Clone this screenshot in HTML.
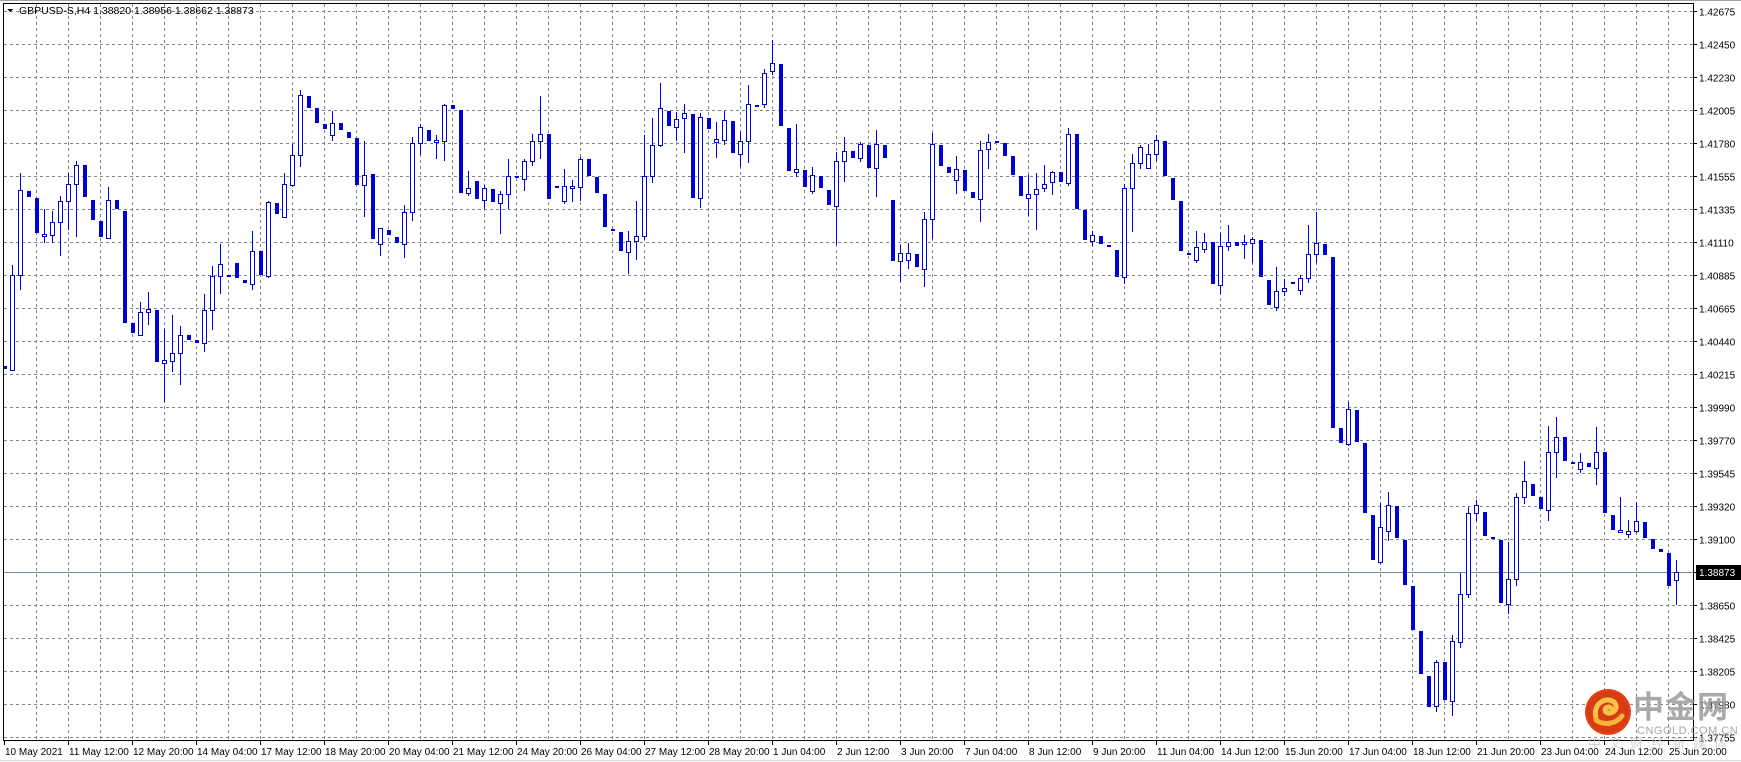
<!DOCTYPE html>
<html><head><meta charset="utf-8">
<style>
html,body{margin:0;padding:0;background:#fff;}
body{width:1741px;height:762px;overflow:hidden;position:relative;font-family:"Liberation Sans","DejaVu Sans",sans-serif;}
svg{position:absolute;left:0;top:0;}
</style></head>
<body>
<svg id="s" width="1741" height="762" xmlns="http://www.w3.org/2000/svg" shape-rendering="crispEdges">
<rect x="0" y="0" width="1741" height="762" fill="#fff"/>
<line x1="0" y1="0.5" x2="1741" y2="0.5" stroke="#a0a0a0"/>
<line x1="0" y1="760.5" x2="1741" y2="760.5" stroke="#d8d8d8"/>
<g id="grid"></g>
<g id="candles"></g>
<rect x="3.5" y="3.5" width="1690" height="737" fill="none" stroke="#000"/>
<g id="axis" font-family="Liberation Sans, DejaVu Sans, sans-serif" font-size="10" fill="#000"></g>
<polygon points="7,9 13,9 10,12" fill="#000"/>
<text x="19" y="14" font-size="10.5" fill="#000" font-family="Liberation Sans, sans-serif">GBPUSD-S,H4  1.38820 1.38956 1.38662 1.38873</text>
<g shape-rendering="geometricPrecision">
<circle cx="1608" cy="712" r="23" fill="#e04418"/>
<circle cx="1608" cy="712" r="21" fill="#d83c14"/>
<path d="M1596 718 C1592 704 1606 696 1614 702 C1620 708 1612 716 1606 712 C1603 709 1608 705 1611 708" fill="none" stroke="#f7c24a" stroke-width="5" stroke-linecap="round"/>
<path d="M1596 720 C1604 726 1616 724 1622 716" fill="none" stroke="#f7b23a" stroke-width="5" stroke-linecap="round"/>
<text x="1633" y="718" font-size="31" font-weight="bold" fill="#9a9a9a" fill-opacity="0.85" font-family="Noto Sans CJK SC, WenQuanYi Zen Hei, sans-serif" letter-spacing="1">中金网</text>
<text x="1637" y="734" font-size="11" fill="#a8a8a8" font-family="Liberation Sans, sans-serif" letter-spacing="0.5">CNGOLD.COM.CN</text>
<text x="1588" y="748" font-size="13" fill="#c8c8c8" fill-opacity="0.8" font-family="Noto Sans CJK SC, sans-serif" letter-spacing="8">中文财经新媒体</text>
</g>
</svg>
<script>
var NS="http://www.w3.org/2000/svg";
function el(p,t,a,txt){var e=document.createElementNS(NS,t);for(var k in a)e.setAttribute(k,a[k]);if(txt!==undefined)e.textContent=txt;p.appendChild(e);return e;}
var grid=document.getElementById('grid'),ax=document.getElementById('axis'),cg=document.getElementById('candles');
var gc="#778899";
var prices=["1.42675","1.42450","1.42230","1.42005","1.41780","1.41555","1.41335","1.41110","1.40885","1.40665","1.40440","1.40215","1.39990","1.39770","1.39545","1.39320","1.39100","","1.38650","1.38425","1.38205","1.37980","1.37755"];
for(var i=0;i<23;i++){var y=11+33*i+0.5;
 el(grid,'line',{x1:4,y1:y,x2:1693,y2:y,stroke:gc,'stroke-dasharray':'3,3'});
 el(ax,'line',{x1:1693,y1:y,x2:1697,y2:y,stroke:'#000'});
 if(prices[i])el(ax,'text',{x:1699,y:y+4},prices[i]);
}
for(var i=1;i<=52;i++){var x=4+32*i+0.5;
 el(grid,'line',{x1:x,y1:4,x2:x,y2:740,stroke:gc,'stroke-dasharray':'3,3'});}
var tl=["10 May 2021","11 May 12:00","12 May 20:00","14 May 04:00","17 May 12:00","18 May 20:00","20 May 04:00","21 May 12:00","24 May 20:00","26 May 04:00","27 May 12:00","28 May 20:00","1 Jun 04:00","2 Jun 12:00","3 Jun 20:00","7 Jun 04:00","8 Jun 12:00","9 Jun 20:00","11 Jun 04:00","14 Jun 12:00","15 Jun 20:00","17 Jun 04:00","18 Jun 12:00","21 Jun 20:00","23 Jun 04:00","24 Jun 12:00","25 Jun 20:00"];
for(var i=0;i<27;i++){var x=4+64*i;
 el(ax,'line',{x1:x+0.5,y1:741,x2:x+0.5,y2:745,stroke:'#000'});
 el(ax,'text',{x:x+1,y:755},tl[i]);}
el(grid,'line',{x1:4,y1:572.5,x2:1693,y2:572.5,stroke:'#778899'});
el(ax,'rect',{x:1696,y:565,width:45,height:15,fill:'#000'});
el(ax,'text',{x:1699,y:576,fill:'#fff'},"1.38873");
var D=[
[775,782,0,0,'d'],[582,785,562,785,'u'],[403,582,367,612,'u'],[405,417,0,0,'d'],[420,493,0,0,'d'],[496,500,443,512,'u'],[471,498,447,512,'u'],[425,471,415,540,'u'],[389,425,367,485,'u'],[349,389,341,500,'u'],
[350,417,0,0,'d'],[424,466,0,0,'d'],[468,503,0,0,'d'],[423,505,396,505,'u'],[424,443,0,0,'d'],[447,684,0,0,'d'],[684,706,0,0,'d'],[662,709,640,709,'u'],[655,662,619,687,'u'],[657,768,0,0,'d'],
[762,770,698,850,'u'],[748,764,667,787,'u'],[709,748,691,813,'u'],[710,720,0,0,'d'],[720,726,0,0,'d'],[656,726,623,744,'u'],[584,656,564,697,'u'],[560,584,517,621,'u'],[582,585,0,0,'d'],[557,590,0,0,'d'],
[593,600,0,0,'d'],[531,601,489,613,'u'],[532,583,0,0,'d'],[428,584,426,588,'u'],[430,453,0,0,'d'],[390,459,367,459,'u'],[329,391,306,395,'u'],[202,329,191,352,'u'],[203,228,0,0,'d'],[229,261,0,0,'d'],
[263,274,0,0,'d'],[260,287,235,297,'u'],[261,275,0,0,'d'],[280,292,0,0,'d'],[292,392,0,0,'d'],[370,393,298,457,'u'],[369,506,0,0,'d'],[484,517,484,540,'u'],[487,499,0,0,'d'],[502,514,0,0,'d'],
[450,516,434,545,'u'],[302,450,290,466,'u'],[270,302,262,326,'u'],[275,298,0,0,'d'],[296,300,287,334,'u'],[223,298,220,339,'u'],[222,230,0,0,'d'],[233,408,0,0,'d'],[399,410,362,414,'u'],[384,421,0,0,'d'],
[398,423,392,440,'u'],[400,429,0,0,'d'],[411,431,405,493,'u'],[372,411,337,441,'u'],[373,376,0,0,'d'],[341,380,337,403,'u'],[299,341,284,350,'u'],[283,298,203,334,'u'],[284,421,0,0,'d'],[394,398,0,0,'d'],
[395,425,358,431,'u'],[395,399,381,425,'u'],[336,397,333,423,'u'],[337,372,0,0,'d'],[375,410,0,0,'d'],[411,481,0,0,'d'],[485,489,0,0,'d'],[492,531,0,0,'d'],[510,533,489,578,'u'],[501,510,426,548,'u'],
[372,501,287,507,'u'],[308,372,250,385,'u'],[228,308,176,310,'u'],[235,268,0,0,'d'],[253,270,237,297,'u'],[240,251,220,323,'u'],[242,419,0,0,'d'],[248,420,240,438,'u'],[250,274,0,0,'d'],[294,300,259,332,'u'],
[255,296,236,305,'u'],[256,325,0,0,'d'],[298,326,280,352,'u'],[221,298,180,344,'u'],[222,226,0,0,'d'],[154,221,146,226,'u'],[134,151,85,156,'u'],[136,268,0,0,'d'],[271,363,0,0,'d'],[359,365,263,372,'u'],
[360,397,0,0,'d'],[370,404,353,408,'u'],[373,399,0,0,'d'],[403,435,0,0,'d'],[342,437,323,517,'u'],[319,342,290,383,'u'],[320,334,0,0,'d'],[306,334,300,342,'u'],[307,355,0,0,'d'],[306,356,275,416,'u'],
[307,334,0,0,'d'],[424,552,0,0,'d'],[537,553,519,596,'u'],[537,551,514,567,'u'],[538,565,0,0,'d'],[465,569,450,605,'u'],[305,465,282,505,'u'],[307,351,0,0,'d'],[354,366,0,0,'d'],[358,382,331,410,'u'],
[360,404,0,0,'d'],[407,419,0,0,'d'],[317,421,299,469,'u'],[300,316,284,355,'u'],[299,302,0,0,'d'],[303,330,0,0,'d'],[331,370,0,0,'d'],[373,416,0,0,'d'],[411,420,371,456,'u'],[401,411,367,486,'u'],
[389,398,350,405,'u'],[365,386,362,412,'u'],[365,385,0,0,'d'],[285,387,271,391,'u'],[285,442,0,0,'d'],[445,508,0,0,'d'],[498,510,490,520,'u'],[500,516,0,0,'d'],[519,524,0,0,'d'],[530,586,0,0,'d'],
[398,588,390,600,'u'],[346,398,326,489,'u'],[312,346,307,355,'u'],[326,355,305,355,'u'],[296,326,286,340,'u'],[299,374,0,0,'d'],[377,423,0,0,'d'],[426,531,0,0,'d'],[536,539,0,0,'d'],[523,550,489,556,'u'],
[512,527,493,535,'u'],[513,601,0,0,'d'],[521,603,493,620,'u'],[512,521,477,529,'u'],[513,522,0,0,'d'],[513,517,498,546,'u'],[507,514,503,556,'u'],[509,588,0,0,'d'],[593,647,0,0,'d'],[617,651,566,656,'u'],
[610,617,592,626,'u'],[598,602,0,0,'d'],[589,615,583,624,'u'],[538,589,477,598,'u'],[515,538,449,556,'u'],[517,541,0,0,'d'],[545,906,0,0,'d'],[907,938,0,0,'d'],[867,940,851,942,'u'],[869,936,0,0,'d'],
[939,1088,0,0,'d'],[1091,1186,0,0,'d'],[1117,1190,1065,1192,'u'],[1071,1125,1043,1145,'u'],[1072,1140,0,0,'d'],[1144,1239,0,0,'d'],[1242,1334,0,0,'d'],[1337,1428,0,0,'d'],[1432,1499,0,0,'d'],[1402,1497,1398,1506,'u'],
[1403,1484,0,0,'d'],[1359,1486,1346,1516,'u'],[1258,1361,1214,1370,'u'],[1088,1258,1074,1266,'u'],[1070,1088,1060,1102,'u'],[1085,1136,0,0,'d'],[1138,1141,0,0,'d'],[1144,1277,0,0,'d'],[1226,1279,1149,1300,'u'],[1053,1226,1045,1239,'u'],
[1020,1053,977,1066,'u'],[1025,1050,0,0,'d'],[1053,1078,0,0,'d'],[958,1080,903,1101,'u'],[925,958,883,1010,'u'],[926,976,0,0,'d'],[978,982,0,0,'d'],[980,993,960,1001,'u'],[981,990,0,0,'d'],[958,991,905,1025,'u'],
[958,1088,0,0,'d'],[1091,1124,0,0,'d'],[1123,1127,1053,1127,'u'],[1125,1131,1101,1137,'u'],[1104,1126,1063,1127,'u'],[1106,1140,0,0,'d'],[1142,1163,0,0,'d'],[1163,1170,0,0,'d'],[1172,1241,0,0,'d'],[1213,1230,1187,1280,'u']
];
var S=2.119,C="#0000d8";
for(var k=0;k<D.length;k++){var d=D[k];var cx=Math.round(4.3+8*k);
 var bt=Math.round(d[0]/S),bb=Math.round(d[1]/S);
 if(d[2]){var wt=Math.round(d[2]/S),wb=Math.round(d[3]/S);
  el(cg,'line',{x1:cx+0.5,y1:wt,x2:cx+0.5,y2:wb+1,stroke:C});}
 if(d[4]=='u'){el(cg,'rect',{x:cx-1.5,y:bt+0.5,width:4,height:Math.max(1,bb-bt),fill:'#fff',stroke:C});}
 else{el(cg,'rect',{x:cx-1,y:bt,width:4,height:Math.max(2,bb-bt),fill:C});}
}
</script>
</body></html>
